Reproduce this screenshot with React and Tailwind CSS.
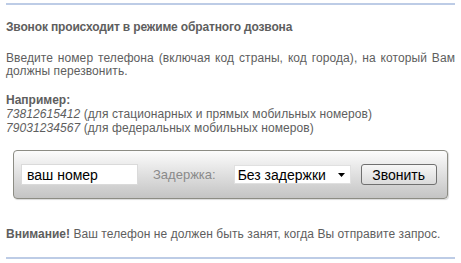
import React from "react";

const App = () => {
  return (
    <div className="w-[461px] h-[263px] bg-white px-[6px] pt-[3px] text-[12px] leading-[13px] tracking-[0.08px] text-[#5e5e5e] font-['Liberation_Sans',Arial,sans-serif]">
      {/* Top rule */}
      <div className="h-[2px] bg-[#bdcce6]" />

      <h2 className="mt-[16px] font-bold text-[12px] leading-[13px] tracking-[-0.15px]">
        Звонок происходит в режиме обратного дозвона
      </h2>

      <p className="mt-[18px] text-justify">
        Введите номер телефона (включая код страны, код города), на который Вам
        должны перезвонить.
      </p>

      <div className="mt-[15px] leading-[14px]">
        <div className="font-bold tracking-normal">Например:</div>
        <div>
          <i>73812615412</i> (для стационарных и прямых мобильных номеров)
        </div>
        <div>
          <i>79031234567</i> (для федеральных мобильных номеров)
        </div>
      </div>

      {/* Call panel */}
      <div className="mt-[15px] ml-[7px] w-[435px] h-[49px] flex items-center px-[7px] border border-[#8c8c84] rounded-[4px] bg-gradient-to-b from-[#fcfcfc] to-[#c4c4c4] shadow-[1px_1px_1px_rgba(0,0,0,0.15)] text-[14px] leading-[16px] tracking-normal">
        <div className="w-[117px] h-[21px] bg-white border border-[#dadada] flex items-center pl-[5px] text-black">
          ваш номер
        </div>
        <span className="ml-[15px] text-[13px] text-[#8a8a8a]">Задержка:</span>
        <div className="ml-[18px] w-[117px] h-[19px] bg-white border border-[#e0e0e0] flex items-center justify-between pl-[3px] pr-[5px] text-black">
          <span>Без задержки</span>
          <svg width="7" height="4" viewBox="0 0 7 4">
            <path d="M0 0h7L3.5 4z" fill="#000" />
          </svg>
        </div>
        <button className="ml-[10px] w-[76px] h-[21px] border border-[#707070] rounded-[3px] bg-gradient-to-b from-[#f7f7f7] to-[#dadada] text-black text-[14px] leading-[16px]">
          Звонить
        </button>
      </div>

      <p className="mt-[29px]">
        <b className="tracking-normal">Внимание!</b> Ваш телефон не должен быть занят, когда Вы отправите запрос.
      </p>

      {/* Bottom rule */}
      <div className="mt-[16px] h-[2px] bg-[#bdcce6]" />
    </div>
  );
};

export default App;
